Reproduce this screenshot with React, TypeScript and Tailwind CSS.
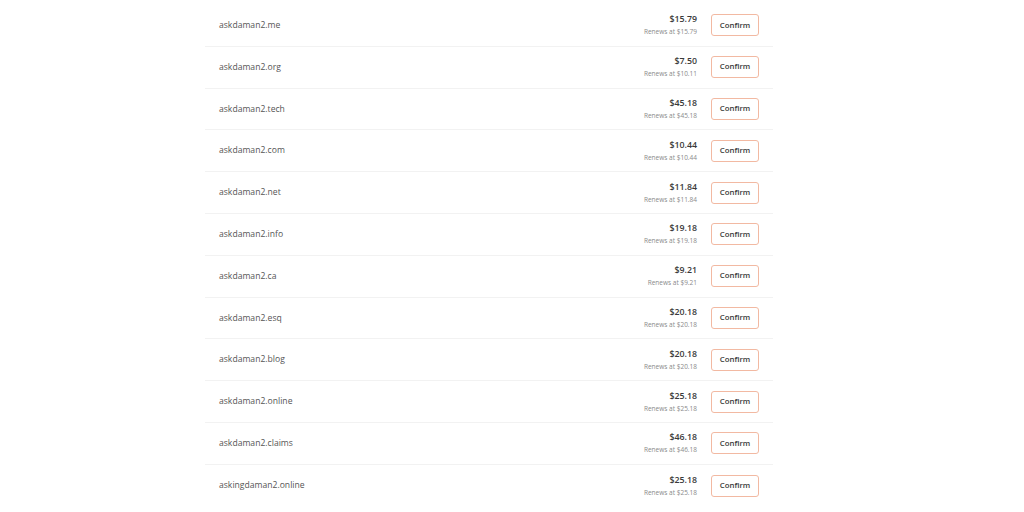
import React from "react";

const rows: [string, string, string][] = [
  ["askdaman2.me", "$15.79", "$15.79"],
  ["askdaman2.org", "$7.50", "$10.11"],
  ["askdaman2.tech", "$45.18", "$45.18"],
  ["askdaman2.com", "$10.44", "$10.44"],
  ["askdaman2.net", "$11.84", "$11.84"],
  ["askdaman2.info", "$19.18", "$19.18"],
  ["askdaman2.ca", "$9.21", "$9.21"],
  ["askdaman2.esq", "$20.18", "$20.18"],
  ["askdaman2.blog", "$20.18", "$20.18"],
  ["askdaman2.online", "$25.18", "$25.18"],
  ["askdaman2.claims", "$46.18", "$46.18"],
  ["askingdaman2.online", "$25.18", "$25.18"],
];

export default function App() {
  return (
    <div
      className="w-[1024px] h-[512px] bg-white overflow-hidden flex"
      style={{ fontFamily: '"Open Sans", "Noto Sans", sans-serif' }}
    >
      <div className="w-[568px] ml-[205px] pt-[5px] flex flex-col">
        {rows.map(([d, p, r], i) => (
          <div
            key={i}
            className={`h-[41.8px] shrink-0 flex items-center pl-[14px] pr-[14px] ${
              i < rows.length - 1 ? "border-b border-[#f2f2f2]" : ""
            }`}
          >
            <div className="flex-1 text-[8.6px] text-[#555]">{d}</div>
            <div className="flex flex-col items-end mr-[14px] mt-[-1px]">
              <div className="text-[8.8px] font-semibold text-[#3a3a3a] leading-[14px]">{p}</div>
              <div className="text-[6.5px] text-[#8a8a8a] leading-[11px]">Renews at {r}</div>
            </div>
            <button className="w-[48px] h-[22px] rounded-[3px] border border-[#f2b9a2] bg-white text-[7.8px] font-semibold text-[#3a3a3a] flex items-center justify-center">
              Confirm
            </button>
          </div>
        ))}
      </div>
    </div>
  );
}
